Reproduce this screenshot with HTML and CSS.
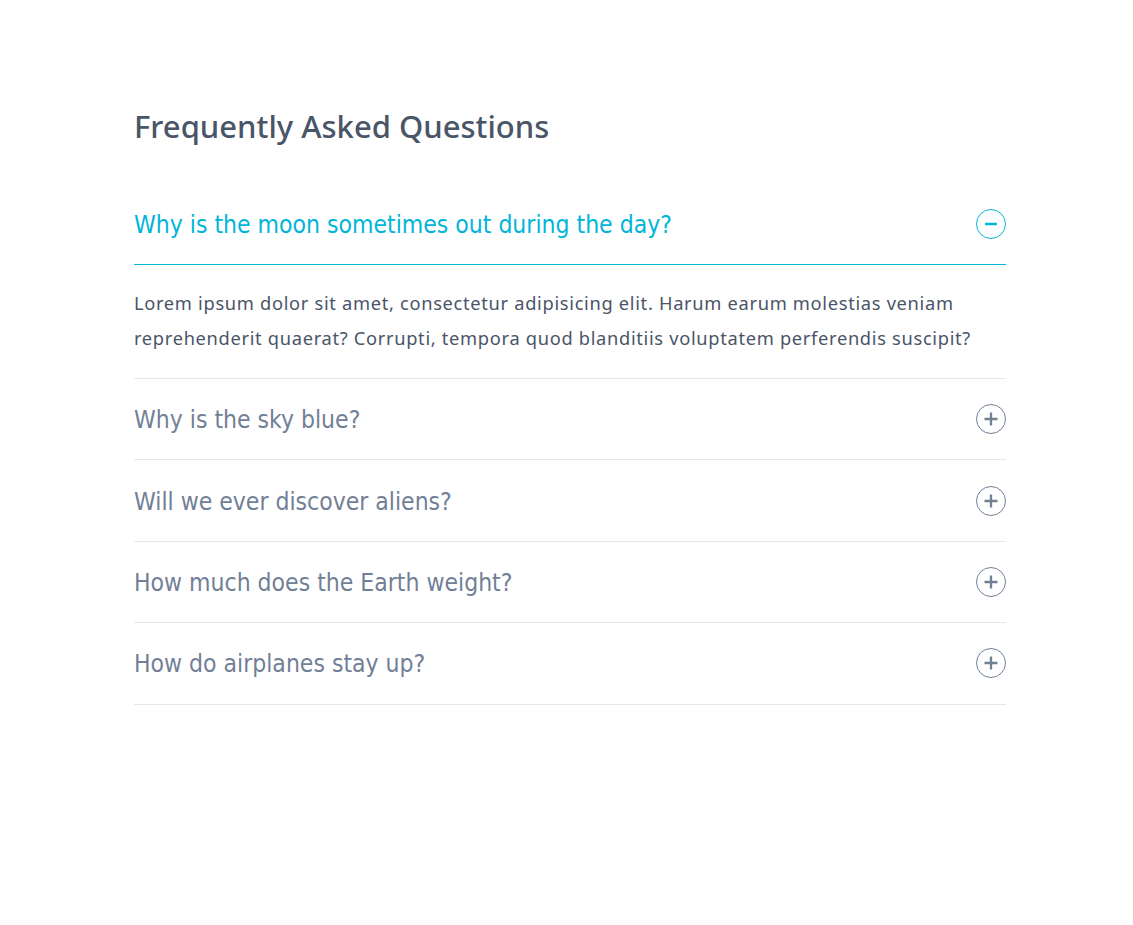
FILE: index.html
```html
<!DOCTYPE html>
<html lang="en">
<head>
<meta charset="utf-8">
<title>FAQ</title>
<link rel="stylesheet" href="styles.css">
</head>
<body>
<main class="faq">
  <h1 class="faq-title">Frequently Asked Questions</h1>
  <div class="faq-list">
    <div class="faq-item is-open">
      <div class="faq-question">
        <span class="faq-q-text">Why is the moon sometimes out during the day?</span>
        <svg class="faq-icon" viewBox="0 0 30 30" width="30" height="30"><circle cx="15" cy="15" r="14.5" fill="none" stroke="currentColor" stroke-width="1"/><path d="M9 15h12" stroke="currentColor" stroke-width="2.5"/></svg>
      </div>
      <div class="faq-answer">Lorem ipsum dolor sit amet, consectetur adipisicing elit. Harum earum molestias veniam reprehenderit quaerat? Corrupti, tempora quod blanditiis voluptatem perferendis suscipit?</div>
    </div>
    <div class="faq-item">
      <div class="faq-question">
        <span class="faq-q-text">Why is the sky blue?</span>
        <svg class="faq-icon" viewBox="0 0 30 30" width="30" height="30"><circle cx="15" cy="15" r="14.5" fill="none" stroke="currentColor" stroke-width="1"/><path d="M8.5 15h13M15 8.5v13" stroke="currentColor" stroke-width="2.3"/></svg>
      </div>
    </div>
    <div class="faq-item">
      <div class="faq-question">
        <span class="faq-q-text">Will we ever discover aliens?</span>
        <svg class="faq-icon" viewBox="0 0 30 30" width="30" height="30"><circle cx="15" cy="15" r="14.5" fill="none" stroke="currentColor" stroke-width="1"/><path d="M8.5 15h13M15 8.5v13" stroke="currentColor" stroke-width="2.3"/></svg>
      </div>
    </div>
    <div class="faq-item">
      <div class="faq-question">
        <span class="faq-q-text">How much does the Earth weight?</span>
        <svg class="faq-icon" viewBox="0 0 30 30" width="30" height="30"><circle cx="15" cy="15" r="14.5" fill="none" stroke="currentColor" stroke-width="1"/><path d="M8.5 15h13M15 8.5v13" stroke="currentColor" stroke-width="2.3"/></svg>
      </div>
    </div>
    <div class="faq-item">
      <div class="faq-question">
        <span class="faq-q-text">How do airplanes stay up?</span>
        <svg class="faq-icon" viewBox="0 0 30 30" width="30" height="30"><circle cx="15" cy="15" r="14.5" fill="none" stroke="currentColor" stroke-width="1"/><path d="M8.5 15h13M15 8.5v13" stroke="currentColor" stroke-width="2.3"/></svg>
      </div>
    </div>
  </div>
</main>
</body>
</html>
```
FILE: styles.css
```css
* { box-sizing: border-box; }
html, body { margin: 0; padding: 0; background: #ffffff; }
body { font-family: "Noto Sans", sans-serif; }

.faq {
  width: 872px;
  margin: 0 0 0 134px;
  padding-top: 105px;
}

.faq-title {
  margin: 0;
  font-family: "Noto Sans", sans-serif;
  font-weight: 500;
  font-size: 31px;
  line-height: 42px;
  color: #4a5568;
}

.faq-list { margin-top: 37px; }

.faq-item {
  border-bottom: 1px solid #e2e8f0;
}

.faq-question {
  display: flex;
  align-items: center;
  justify-content: space-between;
  height: 80.4px;
  color: #718096;
}

.faq-q-text {
  font-family: "DejaVu Sans Condensed", "DejaVu Sans", sans-serif;
  font-size: 24.5px;
  line-height: 30px;
  position: relative;
  top: 1px;
}

.faq-icon { display: block; flex: none; }

.faq-item.is-open .faq-question {
  color: #00b5d8;
  border-bottom: 1px solid #00b5d8;
  height: 81px;
}

.faq-answer {
  padding: 20px 0 23px;
  font-size: 18.3px;
  letter-spacing: 0.68px;
  line-height: 35px;
  color: #4a5568;
}
```
